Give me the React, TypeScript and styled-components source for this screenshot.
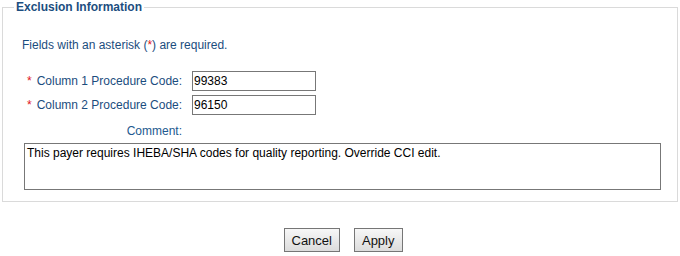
import React from "react";
import styled, { createGlobalStyle } from "styled-components";

const Global = createGlobalStyle`
  html, body { margin: 0; padding: 0; background: #ffffff; }
  body { font-family: "Liberation Sans", Arial, sans-serif; font-size: 12px; color: #1b4d7e; }
  * { box-sizing: border-box; }
`;

const Page = styled.div`
  width: 680px;
  padding: 0 2px 0 2px;
`;

const Fieldset = styled.fieldset`
  margin: 0;
  padding: 0 16px 11px 19px;
  border: 1px solid #dadada;
  min-width: 0;
`;

const Legend = styled.legend`
  margin-left: -8px;
  padding: 0 2px;
  font-size: 12px;
  line-height: 14px;
  font-weight: bold;
  color: #1c4e80;
`;

const Intro = styled.div`
  margin-top: 24px;
  line-height: 14px;
  color: #1b4d7e;
`;

const Req = styled.span<{ $gap?: number }>`
  color: #e0161b;
  margin-right: ${(p) => p.$gap ?? 0}px;
`;

const FormGrid = styled.div`
  margin-top: 19px;
  margin-left: 5px;
  display: grid;
  grid-template-columns: 155px 124px;
  column-gap: 10px;
  row-gap: 4px;
  align-items: center;
`;

const Label = styled.label`
  text-align: right;
  white-space: nowrap;
  line-height: 14px;
  color: #1b4d7e;
`;

const TextInput = styled.input`
  width: 124px;
  height: 20px;
  margin: 0;
  padding: 0 1px;
  border: 1px solid #777777;
  border-radius: 0;
  font-family: "Liberation Sans", Arial, sans-serif;
  font-size: 12px;
  color: #000;
  outline: none;
`;

const CommentLabel = styled(Label)`
  display: block;
  width: 155px;
  margin: 9px 0 0 5px;
  color: #22598f;
`;

const Comment = styled.textarea`
  display: block;
  width: 637px;
  height: 47px;
  margin: 5px 0 0 2px;
  padding: 2px 2px;
  border: 1px solid #777777;
  border-radius: 0;
  font-family: "Liberation Sans", Arial, sans-serif;
  font-size: 12px;
  line-height: 14px;
  color: #000;
  resize: none;
  outline: none;
`;

const Buttons = styled.div`
  display: flex;
  justify-content: center;
  gap: 14px;
  margin-top: 26px;
  padding-left: 6px;
`;

const Button = styled.button`
  height: 24px;
  padding: 0 7px;
  border: 1px solid #767676;
  border-radius: 0;
  background: linear-gradient(#f7f7f7, #dcdcdc);
  font-family: "Liberation Sans", Arial, sans-serif;
  font-size: 13px;
  color: #111;
  cursor: pointer;
`;

export default function App() {
  return (
    <Page>
      <Global />
      <Fieldset>
        <Legend>Exclusion Information</Legend>
        <Intro>
          Fields with an asterisk (<Req>*</Req>) are required.
        </Intro>
        <FormGrid>
          <Label>
            <Req $gap={5}>*</Req>Column 1 Procedure Code:
          </Label>
          <TextInput defaultValue="99383" />
          <Label>
            <Req $gap={5}>*</Req>Column 2 Procedure Code:
          </Label>
          <TextInput defaultValue="96150" />
        </FormGrid>
        <CommentLabel>Comment:</CommentLabel>
        <Comment defaultValue="This payer requires IHEBA/SHA codes for quality reporting. Override CCI edit." />
      </Fieldset>
      <Buttons>
        <Button>Cancel</Button>
        <Button>Apply</Button>
      </Buttons>
    </Page>
  );
}
